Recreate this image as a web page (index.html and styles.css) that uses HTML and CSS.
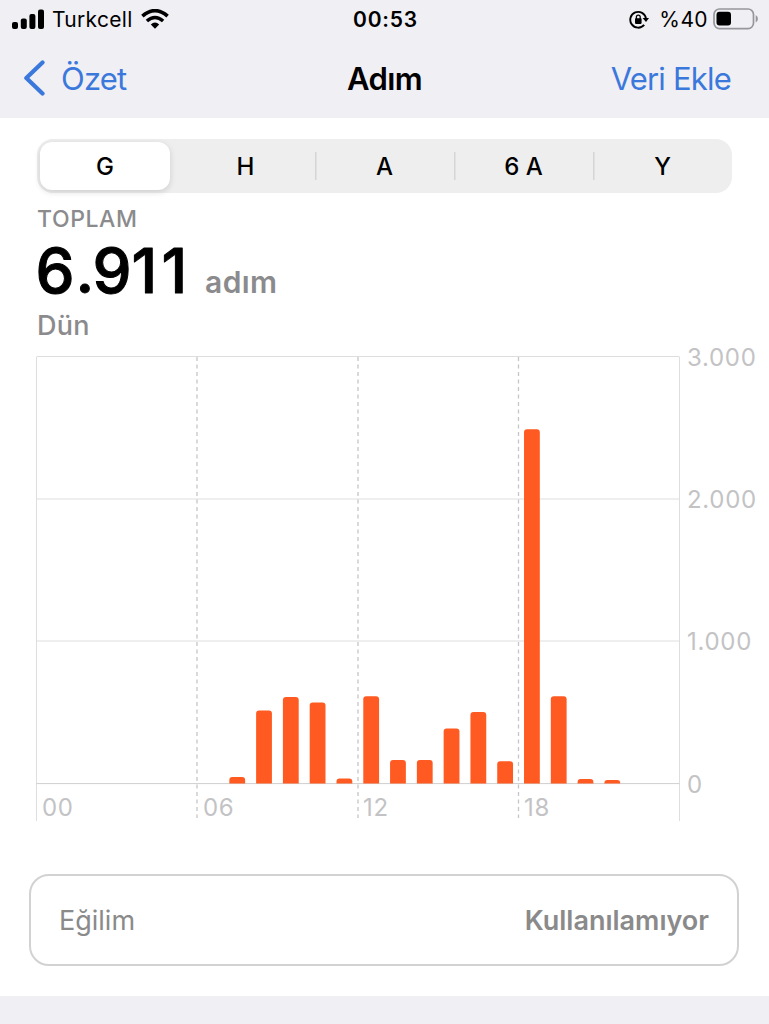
FILE: index.html
```
<!DOCTYPE html>
<html lang="tr">
<head>
    <meta charset="UTF-8">
    <meta name="viewport" content="width=device-width, initial-scale=1.0">
    <title>Adım</title>
    <link rel="stylesheet" href="styles.css">
</head>
<body>

    <header class="header">
        <div class="status-bar">
            <div class="status-left">
                <svg class="signal" width="32" height="20" viewBox="0 0 32 20">
                    <rect x="0" y="13" width="6" height="7" rx="2"/>
                    <rect x="8.8" y="9.5" width="6" height="10.5" rx="2"/>
                    <rect x="17.4" y="5" width="6" height="15" rx="2"/>
                    <rect x="26" y="0.5" width="6" height="19.5" rx="2"/>
                </svg>
                <span class="carrier">Turkcell</span>
                <svg class="wifi" width="28" height="20" viewBox="0 0 28 20">
                    <path d="M1.4 7.2 Q14 -3.8 26.6 7.2" fill="none" stroke="#000" stroke-width="3.7"/>
                    <path d="M5.9 12 Q14 5 22.1 12" fill="none" stroke="#000" stroke-width="3.5"/>
                    <path d="M9.8 15.6 Q14 11.6 18.2 15.6 L14 19.8 Z"/>
                </svg>
            </div>
            <span class="clock">00:53</span>
            <div class="status-right">
                <svg class="lock" width="20" height="19" viewBox="0 0 20 19">
                    <path d="M15.2 14.9 A7.9 7.9 0 1 1 17 8.6" fill="none" stroke="#000" stroke-width="1.9"/>
                    <path d="M13.6 8 L20 8 L17 12 Z"/>
                    <rect x="6" y="8.3" width="6.6" height="5.6" rx="0.8"/>
                    <path d="M7.4 9 V7 A1.9 1.9 0 0 1 11.2 7 V9" fill="none" stroke="#000" stroke-width="1.3"/>
                </svg>
                <span class="percent">%40</span>
                <svg class="battery" width="46" height="22" viewBox="0 0 46 22">
                    <rect x="1" y="1" width="39.5" height="19.6" rx="5.5" fill="none" stroke="#97979b" stroke-width="1.7"/>
                    <rect x="3.5" y="3.8" width="14.5" height="13.8" rx="3"/>
                    <path d="M42.7 7 Q45 8.5 45 10.8 Q45 13 42.7 14.6 Z" fill="#97979b"/>
                </svg>
            </div>
        </div>
        <nav class="nav-bar">
            <a class="back">
                <svg width="22" height="36" viewBox="0 0 22 36">
                    <path d="M19.5 2.5 L3.3 18 L19.5 33.5" fill="none" stroke="#3b78dc" stroke-width="4.2" stroke-linecap="round" stroke-linejoin="round"/>
                </svg>
                <span>Özet</span>
            </a>
            <h1 class="title">Adım</h1>
            <a class="add">Veri Ekle</a>
        </nav>
    </header>

    <main class="content">
        <div class="segments">
            <button class="segment active">G</button>
            <button class="segment">H</button>
            <button class="segment divided">A</button>
            <button class="segment divided">6 A</button>
            <button class="segment divided">Y</button>
        </div>

        <div class="summary">
            <div class="label">TOPLAM</div>
            <div class="total">
                <svg class="value" width="160" height="52" viewBox="0 0 160 52">
                    <text x="-1.5 38.5 55.5 94.5 124.5" y="51.5">6.911</text>
                </svg>
                <span class="unit">adım</span>
            </div>
            <div class="day">Dün</div>
        </div>

        <svg class="chart" width="769" height="486" viewBox="0 340 769 486">
            <g class="grid">
                <path d="M36.5 356.5 H679.5 M36.5 499 H679.5 M36.5 641 H679.5"/>
                <path d="M36.5 357 V821 M679.5 357 V821"/>
                <path class="base" d="M36.5 783.6 H679.5"/>
                <path class="dashed" d="M197 357 V818 M358 357 V818 M518.5 357 V818"/>
            </g>
            <g class="bars" id="bars"></g>
            <g class="axis">
                <text x="687" y="365.5">3.000</text>
                <text x="687" y="508">2.000</text>
                <text x="687" y="650">1.000</text>
                <text x="687" y="792.5">0</text>
                <text x="42" y="816">00</text>
                <text x="203" y="816">06</text>
                <text x="363" y="816">12</text>
                <text x="524" y="816">18</text>
            </g>
        </svg>

        <div class="trend">
            <span class="trend-name">Eğilim</span>
            <span class="trend-value">Kullanılamıyor</span>
        </div>
    </main>

    <script>
        // Steps per hour, 1000 steps = 142.2px
        const steps = { 7: 46, 8: 514, 9: 609, 10: 570, 11: 35, 12: 614, 13: 165, 14: 165,
                        15: 387, 16: 503, 17: 157, 18: 2492, 19: 614, 20: 31, 21: 25 };
        const base = 783.5;
        let html = "";
        for (const hour in steps) {
            const x = 41.8 + hour * 26.79;
            const top = base - steps[hour] * 0.1422;
            const r = Math.min(3, base - top);
            html += `<path d="M${x} ${base} V${top + r} q0 ${-r} 3 ${-r} h9.8 q3 0 3 ${r} V${base} Z"/>`;
        }
        document.getElementById("bars").innerHTML = html;
    </script>

</body>
</html>
```

FILE: styles.css
```
* {
    box-sizing: border-box;
}
body {
    margin: 0;
    height: 1024px;
    overflow: hidden;
    background-color: #f0eff4;
    font-family: Inter, "Liberation Sans", sans-serif;
    color: #000;
}
.header {
    height: 118px;
    background-color: #f0eff4;
}
.status-bar, .nav-bar {
    display: grid;
    grid-template-columns: 1fr auto 1fr;
    align-items: center;
}
.status-bar {
    height: 38px;
    padding: 0 10px 0 12px;
    font-size: 21px;
}
.status-left, .status-right {
    display: flex;
    align-items: center;
}
.status-right {
    justify-content: flex-end;
}
.carrier {
    margin: 1px 8px 0 8px;
    letter-spacing: 0.3px;
}
.clock {
    font-weight: 600;
    letter-spacing: 0.8px;
}
.percent {
    margin: 1px 5px 0 10px;
    letter-spacing: 0.4px;
}
.nav-bar {
    height: 80px;
    padding: 0 38px 0 23px;
    font-size: 31px;
}
.back, .add {
    color: #3b78dc;
    letter-spacing: -0.8px;
}
.back {
    display: flex;
    align-items: center;
    gap: 16px;
}
.title {
    margin: 0 -7px 0 8px;
    font-size: 31px;
    font-weight: 600;
    letter-spacing: -0.6px;
}
.add {
    text-align: right;
}
.content {
    height: 878px;
    background-color: #fff;
    padding-top: 21px;
}
.segments {
    display: grid;
    grid-template-columns: repeat(5, 1fr);
    width: 695px;
    height: 54px;
    margin-left: 37px;
    padding: 3px 0;
    border-radius: 16px;
    background-color: #eee;
}
.segment {
    border: none;
    padding: 0;
    background: none;
    font-family: inherit;
    font-size: 24px;
    font-weight: 500;
    color: #000;
}
.active {
    margin: 0 6px 0 3px;
    border-radius: 12px;
    background-color: #fff;
    box-shadow: 0 2px 6px rgba(0, 0, 0, 0.14);
}
.divided {
    background: linear-gradient(#d5d5d5, #d5d5d5) left center / 1.5px 28px no-repeat;
}
.summary {
    height: 147px;
    padding: 12px 37px 0;
    color: #8b8b8d;
}
.label {
    font-size: 23px;
    font-weight: 500;
    line-height: 28px;
    letter-spacing: 0.6px;
}
.total {
    display: flex;
    align-items: baseline;
    height: 77px;
}
.value {
    margin-top: 8px;
    flex: none;
    overflow: visible;
}
.value text {
    font-size: 62px;
    font-weight: 500;
    stroke: #000;
    stroke-width: 1px;
    stroke-linejoin: round;
}
.unit {
    margin-left: 8px;
    font-size: 30px;
    font-weight: 600;
    letter-spacing: 0.4px;
}
.day {
    font-size: 27px;
    font-weight: 500;
    line-height: 32px;
    letter-spacing: 0.3px;
}
.chart {
    display: block;
}
.grid path {
    fill: none;
    stroke: #dedee0;
    stroke-width: 1;
}
.grid .base {
    stroke: #cfcfcf;
}
.grid .dashed {
    stroke: #c6c6c8;
    stroke-width: 1.3;
    stroke-dasharray: 4 3.5;
}
.bars {
    fill: #ff5a21;
}
.axis text {
    font-size: 24px;
    letter-spacing: 0.7px;
    fill: #c3c3c5;
}
.trend {
    display: flex;
    justify-content: space-between;
    align-items: center;
    width: 710px;
    height: 92px;
    margin: 48px 0 0 29px;
    padding: 0 28px;
    border: 2px solid #d2d2d2;
    border-radius: 20px;
    font-size: 27px;
    color: #8a8a8a;
}
.trend-value {
    font-weight: 600;
}
```
